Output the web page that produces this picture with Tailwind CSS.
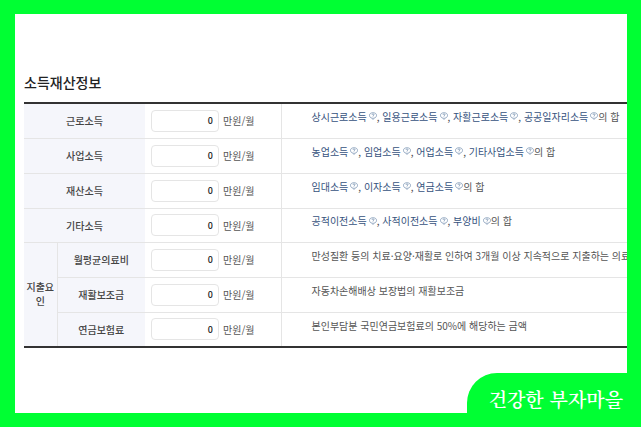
<!DOCTYPE html>
<html lang="ko">
<head>
    <meta charset="UTF-8">
    <meta name="viewport" content="width=device-width, initial-scale=1.0">
    <title>소득재산정보</title>
    <script src="https://cdn.jsdelivr.net/npm/@tailwindcss/browser@4"></script>
</head>
<body class="relative font-['Noto_Sans_CJK_KR',sans-serif] text-[10px] text-[#555]">

    <!-- help icon shared by all the income links -->
    <svg class="hidden">
        <symbol id="help" viewBox="0 0 16 16">
            <path d="M8 1.500c4.500 0 7 2 7 5.200S12.500 12 9.800 12.200L8 15l-1.800-2.800C3.500 12 1 10 1 6.700S3.500 1.500 8 1.500z" fill="none" stroke="currentColor" stroke-width="1.500"/>
            <path d="M6 5.500c0-2.200 4-2.200 4 0C10 7 8 6.800 8 8.300M8 9.300v1.400" fill="none" stroke="currentColor" stroke-width="1.700"/>
        </symbol>
    </svg>

    <main class="min-h-screen overflow-hidden bg-white border-14 border-l-15 border-[#00ff33] pl-[9px] pt-14">
        <h2 class="text-[14px] leading-6 font-medium text-[#222] mb-2">소득재산정보</h2>

        <table class="w-full table-fixed border-collapse border-y-2 border-[#333]">
            <colgroup>
                <col class="w-[33px]">
                <col class="w-[88px]">
                <col class="w-[136px]">
                <col>
            </colgroup>
            <tbody>
                <tr class="h-[35px] border-b border-[#e5e5e5]">
                    <th colspan="2" class="bg-[#f5f6fb] font-medium text-[#444]"><label for="work">근로소득</label></th>
                    <td class="pl-1.5 border-r border-[#e5e5e5]">
                        <div class="flex items-center gap-1">
                            <input id="work" type="text" value="0" class="w-[68px] h-[22px] px-[5px] text-right text-[9px] font-medium text-[#222] bg-white border border-[#e5e5e5] rounded">
                            <span>만원/월</span>
                        </div>
                    </td>
                    <td class="pl-[30px] pb-2 whitespace-nowrap overflow-hidden"><a href="#" class="text-[#36527d]">상시근로소득<svg class="inline size-2 ml-0.5 mb-1 text-[#7590b0]"><use href="#help"/></svg></a>, <a href="#" class="text-[#36527d]">일용근로소득<svg class="inline size-2 ml-0.5 mb-1 text-[#7590b0]"><use href="#help"/></svg></a>, <a href="#" class="text-[#36527d]">자활근로소득<svg class="inline size-2 ml-0.5 mb-1 text-[#7590b0]"><use href="#help"/></svg></a>, <a href="#" class="text-[#36527d]">공공일자리소득<svg class="inline size-2 ml-0.5 mb-1 text-[#7590b0]"><use href="#help"/></svg></a>의 합</td>
                </tr>
                <tr class="h-[35px] border-b border-[#e5e5e5]">
                    <th colspan="2" class="bg-[#f5f6fb] font-medium text-[#444]"><label for="business">사업소득</label></th>
                    <td class="pl-1.5 border-r border-[#e5e5e5]">
                        <div class="flex items-center gap-1">
                            <input id="business" type="text" value="0" class="w-[68px] h-[22px] px-[5px] text-right text-[9px] font-medium text-[#222] bg-white border border-[#e5e5e5] rounded">
                            <span>만원/월</span>
                        </div>
                    </td>
                    <td class="pl-[30px] pb-2 whitespace-nowrap overflow-hidden"><a href="#" class="text-[#36527d]">농업소득<svg class="inline size-2 ml-0.5 mb-1 text-[#7590b0]"><use href="#help"/></svg></a>, <a href="#" class="text-[#36527d]">임업소득<svg class="inline size-2 ml-0.5 mb-1 text-[#7590b0]"><use href="#help"/></svg></a>, <a href="#" class="text-[#36527d]">어업소득<svg class="inline size-2 ml-0.5 mb-1 text-[#7590b0]"><use href="#help"/></svg></a>, <a href="#" class="text-[#36527d]">기타사업소득<svg class="inline size-2 ml-0.5 mb-1 text-[#7590b0]"><use href="#help"/></svg></a>의 합</td>
                </tr>
                <tr class="h-[35px] border-b border-[#e5e5e5]">
                    <th colspan="2" class="bg-[#f5f6fb] font-medium text-[#444]"><label for="property">재산소득</label></th>
                    <td class="pl-1.5 border-r border-[#e5e5e5]">
                        <div class="flex items-center gap-1">
                            <input id="property" type="text" value="0" class="w-[68px] h-[22px] px-[5px] text-right text-[9px] font-medium text-[#222] bg-white border border-[#e5e5e5] rounded">
                            <span>만원/월</span>
                        </div>
                    </td>
                    <td class="pl-[30px] pb-2 whitespace-nowrap overflow-hidden"><a href="#" class="text-[#36527d]">임대소득<svg class="inline size-2 ml-0.5 mb-1 text-[#7590b0]"><use href="#help"/></svg></a>, <a href="#" class="text-[#36527d]">이자소득<svg class="inline size-2 ml-0.5 mb-1 text-[#7590b0]"><use href="#help"/></svg></a>, <a href="#" class="text-[#36527d]">연금소득<svg class="inline size-2 ml-0.5 mb-1 text-[#7590b0]"><use href="#help"/></svg></a>의 합</td>
                </tr>
                <tr class="h-[34px] border-b border-[#e5e5e5]">
                    <th colspan="2" class="bg-[#f5f6fb] font-medium text-[#444]"><label for="other">기타소득</label></th>
                    <td class="pl-1.5 border-r border-[#e5e5e5]">
                        <div class="flex items-center gap-1">
                            <input id="other" type="text" value="0" class="w-[68px] h-[22px] px-[5px] text-right text-[9px] font-medium text-[#222] bg-white border border-[#e5e5e5] rounded">
                            <span>만원/월</span>
                        </div>
                    </td>
                    <td class="pl-[30px] pb-2 whitespace-nowrap overflow-hidden"><a href="#" class="text-[#36527d]">공적이전소득<svg class="inline size-2 ml-0.5 mb-1 text-[#7590b0]"><use href="#help"/></svg></a>, <a href="#" class="text-[#36527d]">사적이전소득<svg class="inline size-2 ml-0.5 mb-1 text-[#7590b0]"><use href="#help"/></svg></a>, <a href="#" class="text-[#36527d]">부양비<svg class="inline size-2 ml-0.5 mb-1 text-[#7590b0]"><use href="#help"/></svg></a>의 합</td>
                </tr>

                <!-- expenses -->
                <tr class="h-[35px] border-b border-[#e5e5e5]">
                    <th rowspan="3" class="bg-[#f5f6fb] font-medium text-[#444] leading-[14px] border-r border-[#e5e5e5]">지출요인</th>
                    <th class="bg-[#f5f6fb] font-medium text-[#444]"><label for="medical">월평균의료비</label></th>
                    <td class="pl-1.5 border-r border-[#e5e5e5]">
                        <div class="flex items-center gap-1">
                            <input id="medical" type="text" value="0" class="w-[68px] h-[22px] px-[5px] text-right text-[9px] font-medium text-[#222] bg-white border border-[#e5e5e5] rounded">
                            <span>만원/월</span>
                        </div>
                    </td>
                    <td class="pl-[30px] pb-2 whitespace-nowrap overflow-hidden">만성질환 등의 치료·요양·재활로 인하여 3개월 이상 지속적으로 지출하는 의료</td>
                </tr>
                <tr class="h-[35px] border-b border-[#e5e5e5]">
                    <th class="bg-[#f5f6fb] font-medium text-[#444]"><label for="rehab">재활보조금</label></th>
                    <td class="pl-1.5 border-r border-[#e5e5e5]">
                        <div class="flex items-center gap-1">
                            <input id="rehab" type="text" value="0" class="w-[68px] h-[22px] px-[5px] text-right text-[9px] font-medium text-[#222] bg-white border border-[#e5e5e5] rounded">
                            <span>만원/월</span>
                        </div>
                    </td>
                    <td class="pl-[30px] pb-2 whitespace-nowrap overflow-hidden">자동차손해배상 보장법의 재활보조금</td>
                </tr>
                <tr class="h-[35px]">
                    <th class="bg-[#f5f6fb] font-medium text-[#444]"><label for="pension">연금보험료</label></th>
                    <td class="pl-1.5 border-r border-[#e5e5e5]">
                        <div class="flex items-center gap-1">
                            <input id="pension" type="text" value="0" class="w-[68px] h-[22px] px-[5px] text-right text-[9px] font-medium text-[#222] bg-white border border-[#e5e5e5] rounded">
                            <span>만원/월</span>
                        </div>
                    </td>
                    <td class="pl-[30px] pb-2 whitespace-nowrap overflow-hidden">본인부담분 국민연금보험료의 50%에 해당하는 금액</td>
                </tr>
            </tbody>
        </table>
    </main>

    <!-- corner tag, overlaps the frame -->
    <div class="absolute right-0 bottom-0 h-[54px] pl-[22px] pr-[18px] pt-2.5 rounded-tl-[30px] bg-[#00ff33]">
        <p class="font-['Noto_Serif_CJK_KR','Noto_Sans_CJK_KR',serif] text-[19px] leading-8 font-semibold text-white whitespace-nowrap">건강한 부자마을</p>
    </div>

</body>
</html>
